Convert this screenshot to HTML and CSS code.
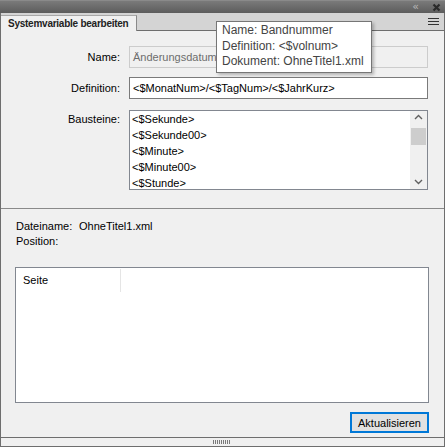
FILE: index.html
```html
<!DOCTYPE html>
<html>
<head>
<meta charset="utf-8">
<link rel="stylesheet" href="styles.css">
</head>
<body>
<div class="panel">
  <div class="titlebar">
    <span class="collapse">&#x00AB;</span>
    <svg class="close" width="9" height="9" viewBox="0 0 9 9"><path d="M1.5 1.5 L7.5 7.5 M7.5 1.5 L1.5 7.5" stroke="#2a2a2a" stroke-width="2.2"/></svg>
  </div>
  <div class="tabrow">
    <div class="tab">Systemvariable bearbeiten</div>
    <div class="tabfill">
      <svg class="menu" width="11" height="8" viewBox="0 0 11 8"><path d="M0 0.5H11M0 3.5H11M0 6.5H11" stroke="#333" stroke-width="1"/></svg>
    </div>
  </div>
  <div class="content">
    <div class="form">
      <label class="lbl">Name:</label>
      <div class="input disabled">Änderungsdatum</div>
      <label class="lbl">Definition:</label>
      <div class="input">&lt;$MonatNum&gt;/&lt;$TagNum&gt;/&lt;$JahrKurz&gt;</div>
      <label class="lbl">Bausteine:</label>
      <div class="listbox">
        <div class="items">
          <div>&lt;$Sekunde&gt;</div>
          <div>&lt;$Sekunde00&gt;</div>
          <div>&lt;$Minute&gt;</div>
          <div>&lt;$Minute00&gt;</div>
          <div>&lt;$Stunde&gt;</div>
        </div>
        <div class="scrollbar">
          <svg width="17" height="14" viewBox="0 0 17 14"><path d="M5 8 L8.5 4.5 L12 8" fill="none" stroke="#606060" stroke-width="1.4"/></svg>
          <div class="thumb"></div>
          <div class="spacer"></div>
          <svg width="17" height="14" viewBox="0 0 17 14"><path d="M5 5 L8.5 8.5 L12 5" fill="none" stroke="#606060" stroke-width="1.4"/></svg>
        </div>
      </div>
    </div>
    <div class="sep"></div>
    <div class="info">
      <div class="inforow"><span class="ikey">Dateiname:</span><span>OhneTitel1.xml</span></div>
      <div class="inforow"><span class="ikey">Position:</span></div>
    </div>
    <div class="table">
      <div class="thead"><div class="th">Seite</div></div>
    </div>
    <div class="actions"><button class="btn">Aktualisieren</button></div>
  </div>
  <div class="grip">
    <div class="dots"><i></i><i></i><i></i><i></i><i></i><i></i><i></i><i></i><i></i></div>
  </div>
  <div class="tooltip">
    <div>Name: Bandnummer</div>
    <div>Definition: &lt;$volnum&gt;</div>
    <div>Dokument: OhneTitel1.xml</div>
  </div>
</div>
</body>
</html>
```
FILE: styles.css
```css
* { box-sizing: border-box; }
html, body { margin: 0; padding: 0; }
body {
  width: 445px;
  height: 447px;
  overflow: hidden;
  font-family: "Liberation Sans", Arial, sans-serif;
  font-size: 11px;
  color: #000;
  background: #f0f0f0;
}
.panel {
  position: relative;
  width: 445px;
  height: 447px;
  display: flex;
  flex-direction: column;
}
.titlebar {
  height: 13px;
  background: linear-gradient(#7a7a7a, #5c5c5c);
  border-top: 1px solid #8a8a8a;
  display: flex;
  align-items: center;
  justify-content: flex-end;
  gap: 13px;
  padding-right: 4px;
}
.collapse {
  color: #b8b8b8;
  font-size: 11px;
  line-height: 10px;
  font-family: "DejaVu Sans", sans-serif;
}
.close { display: block; }
.tabrow {
  height: 18px;
  display: flex;
  background: #d4d4d4;
  border-left: 1px solid #6e6e6e;
  border-right: 1px solid #6e6e6e;
}
.tab {
  margin-top: 2px;
  width: 136px;
  height: 16px;
  background: #f0f0f0;
  border-top: 1px solid #a8a8a8;
  border-right: 1px solid #8a8a8a;
  font-family: "Liberation Sans", Tahoma, sans-serif;
  font-weight: bold;
  font-size: 10px;
  letter-spacing: -0.25px;
  white-space: nowrap;
  overflow: hidden;
  padding-left: 7px;
  line-height: 15px;
  color: #222;
}
.tabfill {
  flex: 1;
  border-bottom: 1px solid #6e6e6e;
  display: flex;
  justify-content: flex-end;
  align-items: center;
  padding-right: 5px;
  padding-top: 1px;
}
.content {
  flex: 1;
  display: flex;
  flex-direction: column;
  border-left: 1px solid #6e6e6e;
  border-right: 1px solid #6e6e6e;
  padding-top: 15px;
}
.form {
  display: grid;
  grid-template-columns: 119px 299px;
  column-gap: 9px;
  row-gap: 9px;
  padding-right: 15px;
}
.lbl {
  text-align: right;
  line-height: 22px;
}
.form .lbl:nth-of-type(3) { margin-top: 2px; line-height: 18px; }
.input {
  height: 22px;
  border: 1px solid #7a7a7a;
  background: #fff;
  padding-left: 3px;
  line-height: 20px;
  white-space: nowrap;
  overflow: hidden;
}
.input.disabled {
  border-color: #cccccc;
  background: #f0f0f0;
  color: #6d6d6d;
}
.listbox {
  margin-top: 2px;
  height: 80px;
  border: 1px solid #828790;
  background: #fff;
  display: flex;
}
.items {
  flex: 1;
  padding-left: 2px;
  overflow: hidden;
}
.items div { height: 16px; line-height: 16px; }
.scrollbar {
  width: 17px;
  background: #f0f0f0;
  display: flex;
  flex-direction: column;
}
.scrollbar svg { display: block; }
.thumb {
  margin: 3px 1px 0;
  height: 17px;
  background: #cdcdcd;
}
.spacer { flex: 1; }
.sep {
  margin-top: 18px;
  height: 1px;
  background: #8a8a8a;
}
.info {
  padding: 10px 0 0 15px;
  display: flex;
  flex-direction: column;
}
.inforow { height: 15px; line-height: 15px; display: flex; }
.ikey { width: 63px; flex: none; }
.table {
  margin: 18px 15px 0 14px;
  height: 136px;
  border: 1px solid #828790;
  background: #fff;
}
.thead { display: flex; padding-top: 1px; }
.th {
  width: 105px;
  height: 23px;
  border-right: 1px solid #e5e5e5;
  padding-left: 7px;
  line-height: 22px;
}
.actions {
  display: flex;
  justify-content: flex-end;
  padding: 9px 15px 0 0;
}
.btn {
  width: 79px;
  height: 21px;
  border: 2px solid #0078d7;
  background: #e1e1e1;
  font-family: "Liberation Sans", Arial, sans-serif;
  font-size: 11px;
  padding: 0;
  color: #000;
}
.grip {
  margin-top: auto;
  height: 10px;
  border: 1px solid #6e6e6e;
  background: #f0f0f0;
  display: flex;
  justify-content: center;
  align-items: center;
}
.dots { display: flex; gap: 1px; margin-left: -2px; }
.dots i { display: block; width: 1px; height: 4px; background: #7a7a7a; }
.tooltip {
  position: absolute;
  left: 216px;
  top: 21px;
  width: 156px;
  height: 52px;
  background: #fff;
  border: 1px solid #767676;
  box-shadow: 2px 2px 3px rgba(0,0,0,0.25);
  padding: 1px 0 0 5px;
  font-size: 12px;
  color: #444;
  line-height: 15.5px;
}
```
